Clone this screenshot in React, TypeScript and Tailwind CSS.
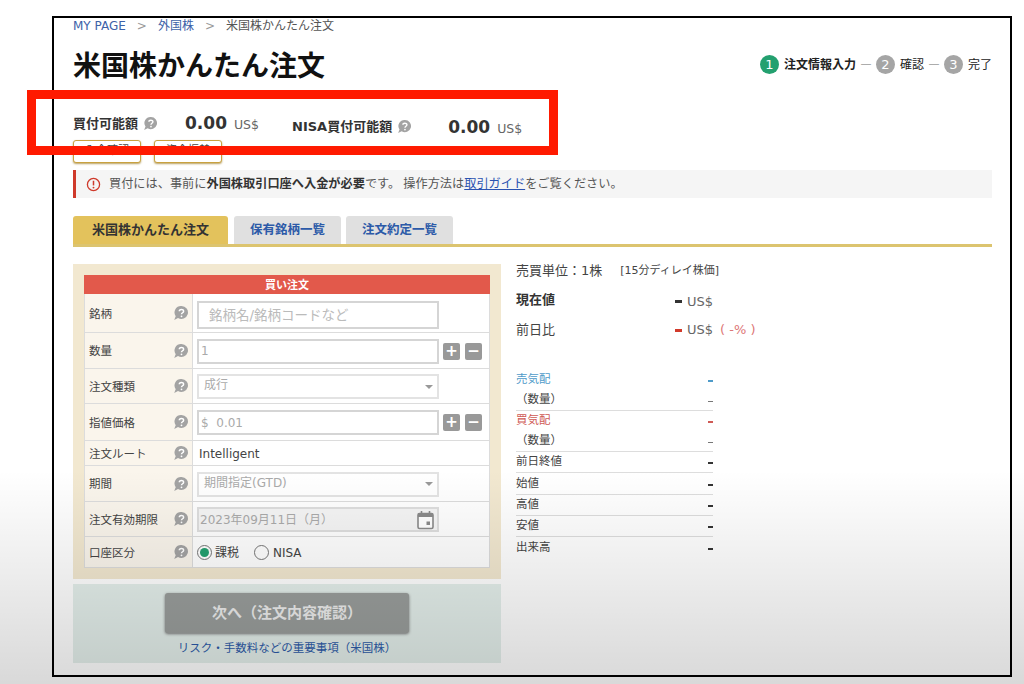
const font = { jp: "font-['DejaVu_Sans','Noto_Sans_CJK_JP',sans-serif]" };

function Help({ size = 16, color = "#a3a3a3" }: { size?: number; color?: string }) {
  return (
    <svg width={size} height={size} viewBox="0 0 16 16" className="shrink-0">
      <path d="M8.500 1a6.500 6.500 0 1 1-3.500 12L1.200 15l1.500-3.800A6.500 6.500 0 0 1 8.500 1z" fill={color} />
      <path d="M6.300 6.200c0-2.200 4.300-2.300 4.300 0 0 1.600-2.100 1.500-2.100 3.100" fill="none" stroke="#fff" strokeWidth="1.500" />
      <circle cx="8.500" cy="11.300" r="0.900" fill="#fff" />
    </svg>
  );
}

function Step({ n, label, active }: { n: number; label: string; active?: boolean }) {
  return (
    <div className="flex items-center gap-[5px]">
      <span
        className={`flex h-[19px] w-[19px] items-center justify-center rounded-full text-[13px] text-white ${
          active ? "bg-[#23a06f]" : "bg-[#a5a5a5]"
        }`}
      >
        {n}
      </span>
      <span className={`text-[12px] text-[#222] ${active ? "font-bold" : ""}`}>{label}</span>
    </div>
  );
}

function Row({
  label,
  h,
  children,
  last,
}: {
  label: string;
  h: string;
  children: React.ReactNode;
  last?: boolean;
}) {
  return (
    <div className={`flex ${h} ${last ? "" : "border-b border-[#dcdcdc]"}`}>
      <div className="flex w-[108px] shrink-0 items-center justify-between border-r border-[#dcdcdc] bg-[#faf5ec] pl-[4px] pr-[3px] text-[11.5px] text-[#444]">
        <span className="pt-[3px]">{label}</span>
        <Help />
      </div>
      <div className="flex min-w-0 flex-1 items-center bg-white pl-[4px] pt-[1px]">{children}</div>
    </div>
  );
}

function PlusMinus() {
  return (
    <div className="ml-[4px] flex gap-[5px]">
      <span className="flex h-[17px] w-[17px] items-center justify-center rounded-[2px] bg-[#999] text-[15px] font-bold leading-none text-white">
        +
      </span>
      <span className="flex h-[17px] w-[17px] items-center justify-center rounded-[2px] bg-[#999] text-[15px] font-bold leading-none text-white">
        −
      </span>
    </div>
  );
}

function SelectBox({ text }: { text: string }) {
  return (
    <div className="flex h-[25px] w-[242px] items-center justify-between border-2 border-[#e3e3e3] pl-[5px] pr-[4px] text-[12px] text-[#aaa]">
      <span className="-mt-[3px]">{text}</span>
      <span className="h-0 w-0 border-x-[4.5px] border-t-[4px] border-x-transparent border-t-[#999]" />
    </div>
  );
}

const quotes = [
  { label: "売気配", dash: "h-[2px] bg-[#4f9bc9]", text: "text-[#4f9bc9]", border: false, h: "h-[20px]" },
  { label: "（数量）", dash: "h-[1px] bg-[#777]", text: "text-[#444]", border: true, h: "h-[21px]" },
  { label: "買気配", dash: "h-[2px] bg-[#cf5a55]", text: "text-[#cf5a55]", border: false, h: "h-[20px]" },
  { label: "（数量）", dash: "h-[1px] bg-[#777]", text: "text-[#444]", border: true, h: "h-[21px]" },
  { label: "前日終値", dash: "h-[2px] bg-[#333]", text: "text-[#444]", border: true, h: "h-[21px]" },
  { label: "始値", dash: "h-[2px] bg-[#333]", text: "text-[#444]", border: true, h: "h-[22px]" },
  { label: "高値", dash: "h-[2px] bg-[#333]", text: "text-[#444]", border: true, h: "h-[21px]" },
  { label: "安値", dash: "h-[2px] bg-[#333]", text: "text-[#444]", border: true, h: "h-[21px]" },
  { label: "出来高", dash: "h-[2px] bg-[#333]", text: "text-[#444]", border: false, h: "h-[21px]" },
];

export default function App() {
  return (
    <div className={`relative h-[684px] w-[1024px] overflow-hidden bg-white pl-[52px] pt-[16px] ${font.jp}`}>
      <div className="h-[661px] w-[960px] border-2 border-black pl-[19px] pr-[18px]">
        {/* breadcrumb */}
        <div className="flex h-[16px] items-center text-[12px] leading-none text-[#555]">
          <span className="text-[#3c62a8]">MY PAGE</span>
          <span className="mx-[11px] text-[#999]">&gt;</span>
          <span className="text-[#3c62a8]">外国株</span>
          <span className="mx-[11px] text-[#999]">&gt;</span>
          <span>米国株かんたん注文</span>
        </div>

        {/* title + steps */}
        <div className="flex h-[63px] items-center justify-between">
          <h1 className="mt-[2px] text-[28px] font-bold leading-none text-[#111]">米国株かんたん注文</h1>
          <div className="-mt-[2px] flex items-center gap-[4.5px]">
            <Step n={1} label="注文情報入力" active />
            <span className="text-[11px] text-[#999]">—</span>
            <Step n={2} label="確認" />
            <span className="text-[11px] text-[#999]">—</span>
            <Step n={3} label="完了" />
          </div>
        </div>

        {/* balances */}
        <div className="flex h-[42px] items-start pt-[17px] text-[#333]">
          <span className="text-[13px] font-bold">買付可能額</span>
          <span className="ml-[5px] mt-[2px]"><Help size={15} /></span>
          <span className="ml-[27px] -mt-[3px] text-[17px] font-bold">0.00</span>
          <span className="ml-[7px] mt-[2px] text-[12.5px] text-[#666]">US$</span>
          <span className="ml-[33px] mt-[3px] text-[13px] font-bold">NISA買付可能額</span>
          <span className="ml-[5px] mt-[5px]"><Help size={15} /></span>
          <span className="ml-[36px] mt-[1px] text-[17px] font-bold">0.00</span>
          <span className="ml-[7px] mt-[6px] text-[12.5px] text-[#666]">US$</span>
        </div>
        <div className="flex h-[31px] gap-[13px] pt-[1px]">
          <span className="flex h-[23px] w-[68px] items-center justify-center rounded-[3px] border border-[#c9a13f] bg-white text-[11px] text-[#444] shadow-[0_1px_2px_#b9a060]">
            入金確認
          </span>
          <span className="flex h-[23px] w-[68px] items-center justify-center rounded-[3px] border border-[#c9a13f] bg-white text-[11px] text-[#444] shadow-[0_1px_2px_#b9a060]">
            資金振替
          </span>
        </div>

        {/* alert */}
        <div className="flex h-[28px] items-center border-l-[3px] border-[#cf3a2b] bg-[#f5f5f5] pl-[10px] text-[12.2px] text-[#555]">
          <svg width="15" height="15" viewBox="0 0 16 16" className="mr-[8px] shrink-0">
            <circle cx="8" cy="8" r="6.500" fill="none" stroke="#cf3a2b" strokeWidth="1.400" />
            <path d="M8 4v5" stroke="#cf3a2b" strokeWidth="1.600" />
            <circle cx="8" cy="11.300" r="1" fill="#cf3a2b" />
          </svg>
          <span>
            買付には、事前に<b className="text-[#333]">外国株取引口座へ入金が必要</b>です。
            <span className="ml-[3px]">操作方法は</span>
            <span className="text-[#2a52b0] underline">取引ガイド</span>をご覧ください。
          </span>
        </div>

        {/* tabs */}
        <div className="mt-[18px] flex h-[31px] gap-[5px] border-b-[3px] border-[#dcc46f] text-[12px] font-bold">
          <div className="flex w-[155px] items-center justify-center rounded-t-[3px] bg-[#e3c25c] text-[13px] text-[#333]">
            米国株かんたん注文
          </div>
          <div className="ml-[1px] flex w-[107px] items-center justify-center rounded-t-[3px] bg-[#e0e0e0] text-[12.5px] text-[#2c5aa8]">
            保有銘柄一覧
          </div>
          <div className="flex w-[107px] items-center justify-center rounded-t-[3px] bg-[#e0e0e0] text-[12.5px] text-[#2c5aa8]">
            注文約定一覧
          </div>
        </div>

        <div className="mt-[17px] flex">
          {/* order form */}
          <div className="w-[428px] shrink-0">
            <div className="bg-[#f2e8d0] p-[11px]">
              <div className="border-x border-b border-[#dcdcdc]">
                <div className="-mx-px flex h-[19px] items-center justify-center bg-[#e2594b] pt-[3px] text-[11px] font-bold text-white">
                  買い注文
                </div>
                <Row label="銘柄" h="h-[39px]">
                  <div className="mt-[3px] flex h-[28px] w-[242px] items-center border-2 border-[#d5d5d5] pl-[10px] text-[13.5px] text-[#bbb]">
                    銘柄名/銘柄コードなど
                  </div>
                </Row>
                <Row label="数量" h="h-[36px]">
                  <div className="flex h-[25px] w-[242px] items-center border-2 border-[#d5d5d5] pl-[2px] text-[12px] text-[#aaa]">1</div>
                  <PlusMinus />
                </Row>
                <Row label="注文種類" h="h-[35px]">
                  <SelectBox text="成行" />
                </Row>
                <Row label="指値価格" h="h-[37px]">
                  <div className="flex h-[25px] w-[242px] items-center border-2 border-[#d5d5d5] pl-[2px] text-[12px] text-[#aaa]">
                    $&nbsp;&nbsp;0.01
                  </div>
                  <PlusMinus />
                </Row>
                <Row label="注文ルート" h="h-[25px]">
                  <span className="pl-[2px] text-[12px] text-[#444]">Intelligent</span>
                </Row>
                <Row label="期間" h="h-[36px]">
                  <SelectBox text="期間指定(GTD)" />
                </Row>
                <Row label="注文有効期限" h="h-[35px]">
                  <div className="flex h-[25px] w-[242px] items-center justify-between border-2 border-[#dedede] bg-[#f5f5f5] pl-[1px] pr-[2px] text-[12px] text-[#aaa]">
                    <span>2023年09月11日（月）</span>
                    <svg width="19" height="20" viewBox="0 0 19 20">
                      <rect x="2" y="3.500" width="15" height="15" rx="1.500" fill="#fff" stroke="#8a8a8a" strokeWidth="1.600" />
                      <rect x="2" y="3.500" width="15" height="3.500" fill="#8a8a8a" />
                      <path d="M5.500 1v3M13.500 1v3" stroke="#8a8a8a" strokeWidth="1.600" />
                      <rect x="10.500" y="11.500" width="3.500" height="3.500" fill="#8a8a8a" />
                    </svg>
                  </div>
                </Row>
                <Row label="口座区分" h="h-[30px]" last>
                  <div className="flex items-center text-[12px] text-[#444]">
                    <span className="flex h-[15px] w-[15px] items-center justify-center rounded-full border border-[#777]">
                      <span className="h-[9px] w-[9px] rounded-full bg-[#23a06f]" />
                    </span>
                    <span className="ml-[3px]">課税</span>
                    <span className="ml-[15px] h-[15px] w-[15px] rounded-full border border-[#777]" />
                    <span className="ml-[4px]">NISA</span>
                  </div>
                </Row>
              </div>
            </div>
            <div className="mt-[5px] flex h-[79px] flex-col items-center bg-[#e4efeb] pt-[9px]">
              <div className="flex h-[40px] w-[244px] items-center justify-center rounded-[3px] bg-[#9a9e9c] text-[15px] font-bold text-[#eee] shadow-[0_1px_3px_#777]">
                次へ（注文内容確認）
              </div>
              <span className="mt-[7px] text-[11.5px] text-[#2c5aa8]">リスク・手数料などの重要事項（米国株）</span>
            </div>
          </div>

          {/* quote panel */}
          <div className="ml-[15px] w-[260px] text-[#444]">
            <div className="flex h-[14px] items-center">
              <span className="text-[13px]">売買単位：1株</span>
              <span className="ml-[18px] text-[11px]">[15分ディレイ株価]</span>
            </div>
            <div className="mt-[14px] flex h-[16px] items-center">
              <span className="w-[159px] text-[13px] font-bold text-[#333]">現在値</span>
              <span className="mr-[5px] mt-[2px] h-[3px] w-[7px] bg-[#333]" />
              <span className="mt-[4px] text-[13px] text-[#666]">US$</span>
            </div>
            <div className="mt-[14px] flex h-[16px] items-center">
              <span className="w-[159px] text-[13px]">前日比</span>
              <span className="mr-[5px] h-[3px] w-[7px] bg-[#d23a2b]" />
              <span className="text-[13px] text-[#666]">US$</span>
              <span className="ml-[7px] text-[13px] text-[#d77]">( -% )</span>
            </div>
            <div className="mt-[32px] w-[197px]">
              {quotes.map((q, i) => (
                <div
                  key={i}
                  className={`flex items-center justify-between text-[11.5px] ${q.h} ${q.border ? "border-b border-[#ddd]" : ""}`}
                >
                  <span className={q.text}>{q.label}</span>
                  <span className={`mt-[2px] w-[5px] ${q.dash}`} />
                </div>
              ))}
            </div>
          </div>
        </div>
      </div>

      {/* fade over the lower page */}
      <div className="pointer-events-none absolute bottom-0 left-0 right-0 h-[214px] bg-gradient-to-b from-transparent to-black/15" />

      {/* red annotation box */}
      <div className="pointer-events-none absolute left-[27px] top-[90px] h-[65px] w-[531px] border-[9px] border-[#ff1a00]" />
    </div>
  );
}
